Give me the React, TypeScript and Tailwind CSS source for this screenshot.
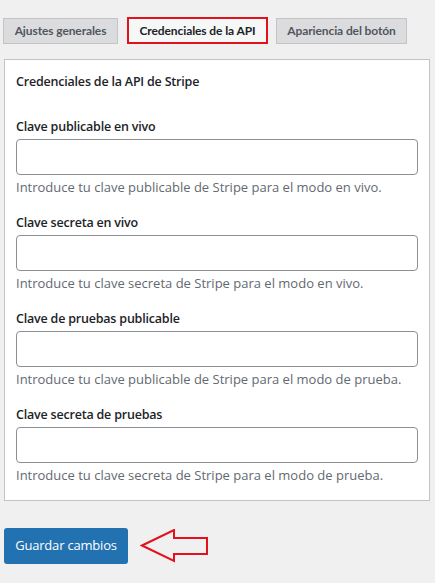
import React from 'react';

const FIELDS = [
  { label: 'Clave publicable en vivo', help: 'Introduce tu clave publicable de Stripe para el modo en vivo.' },
  { label: 'Clave secreta en vivo', help: 'Introduce tu clave secreta de Stripe para el modo en vivo.' },
  { label: 'Clave de pruebas publicable', help: 'Introduce tu clave publicable de Stripe para el modo de prueba.' },
  { label: 'Clave secreta de pruebas', help: 'Introduce tu clave secreta de Stripe para el modo de prueba.' },
];

export default function App() {
  return (
    <div
      className="w-[435px] h-[583px] bg-[#f0f0f1] text-[13px] text-[#1d2327] overflow-hidden"
      style={{ fontFamily: '"Open Sans", "Noto Sans", sans-serif' }}
    >
      {/* tabs */}
      <div className="flex items-center gap-2 pl-[3px] pt-[17px] font-[Lato,sans-serif]">
        <button className="h-[26px] w-[115px] bg-[#dcdcde] border border-[#c3c4c7] text-[#50575e] font-bold text-[12px] tracking-[-0.1px]">
          Ajustes generales
        </button>
        <button className="h-[27px] w-[141px] ml-[1px] bg-[#f6f7f7] border-2 border-[#e3101e] text-[#1d2327] font-bold text-[12px] tracking-[-0.1px]">
          Credenciales de la API
        </button>
        <button className="h-[26px] w-[131px] bg-[#dcdcde] border border-[#c3c4c7] text-[#50575e] font-bold text-[12px] tracking-[-0.1px]">
          Apariencia del botón
        </button>
      </div>

      {/* panel */}
      <div className="mt-[15px] ml-[4px] w-[426px] bg-white border border-[#c3c4c7] px-[11px] pt-[13px] pb-[16px]">
        <h2 className="font-semibold text-[12.5px] tracking-[-0.2px] leading-[18px]">Credenciales de la API de Stripe</h2>
        <div className="mt-[27px] flex flex-col gap-[18px]">
          {FIELDS.map((f) => (
            <div key={f.label}>
              <label className="block font-semibold text-[12.5px] tracking-[-0.2px] leading-[18px]">{f.label}</label>
              <input
                type="text"
                className="mt-[3px] block w-[402px] h-[36px] rounded-[4px] border border-[#8c8f94] bg-white px-2"
              />
              <p className="mt-[3px] text-[#646970] leading-[18px]">{f.help}</p>
            </div>
          ))}
        </div>
      </div>

      {/* footer */}
      <div className="mt-[27px] ml-[4px] flex items-center gap-[12px]">
        <button className="h-[36px] w-[124px] rounded-[3px] bg-[#2271b1] text-white text-[13px] tracking-[-0.2px]">
          Guardar cambios
        </button>
        <svg width="70" height="34" viewBox="0 0 70 34">
          <polygon
            points="2,16.5 34,1 34,9 67,9 67,25 34,25 34,32"
            fill="none"
            stroke="#e3101e"
            strokeWidth="2"
            strokeLinejoin="miter"
          />
        </svg>
      </div>
    </div>
  );
}
